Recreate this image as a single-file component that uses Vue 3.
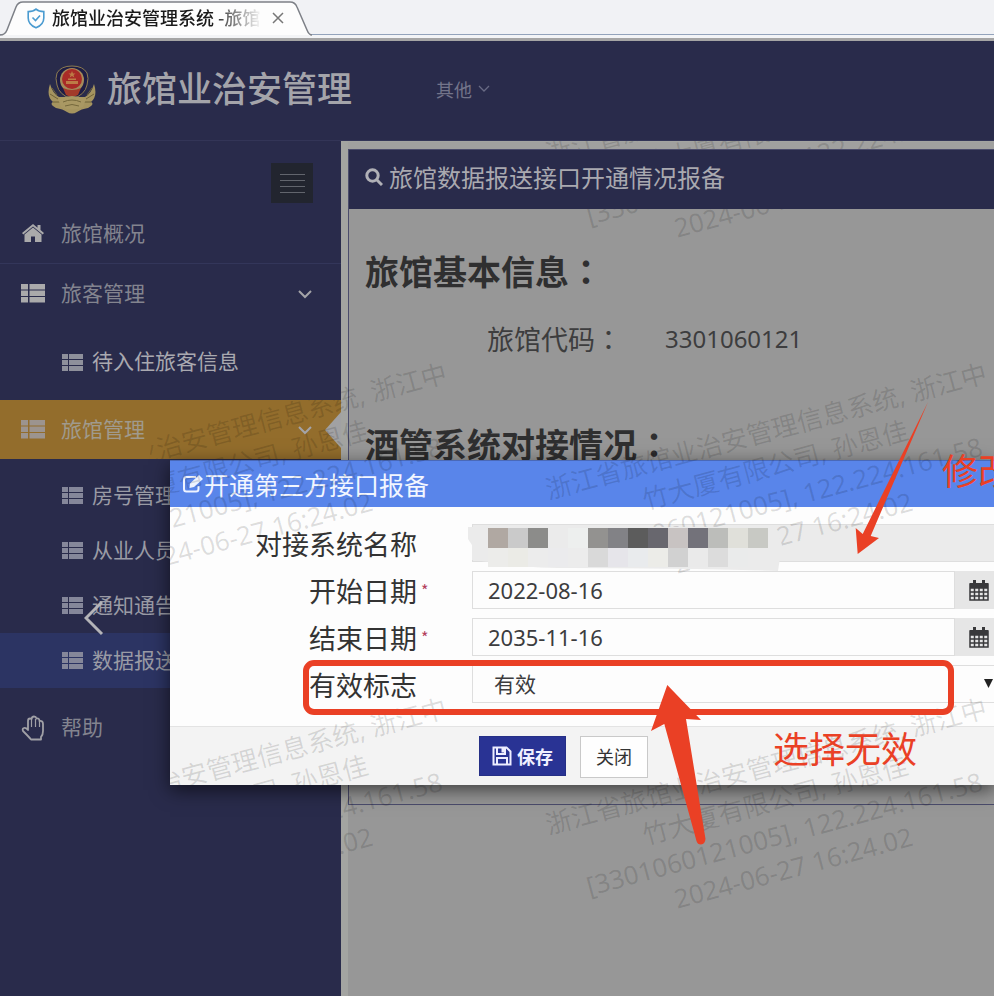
<script setup>
import { ref } from 'vue'

const startDate = ref('2022-08-16')
const endDate = ref('2035-11-16')
const flag = ref('有效')

const hotelItems = [
  { text: '房号管理', active: false },
  { text: '从业人员', active: false },
  { text: '通知通告', active: false },
  { text: '数据报送', active: true }
]

const marks = [
  [780, 147],
  [240, 483], [780, 483],
  [240, 818], [780, 818]
]
const markLines = [
  '浙江省旅馆业治安管理信息系统, 浙江中',
  '竹大厦有限公司, 孙恩佳',
  '[3301060121005], 122.224.161.58',
  '2024-06-27 16:24.02'
]

const mosaicTop = ['#b0a8a2', '#cacaca', '#8c8c8a', '#ebebeb', '#edefee', '#939290', '#828286', '#5c5c5c', '#68676e', '#c8c3c2', '#73727a', '#bcbdba', '#e0e0da', '#c8c9c4']
const mosaicBottom = ['#ececea', '#ebebe6', '#ececec', '#ebebed', '#ececec', '#d9d9d9', '#e6e5ea', '#e9ebed', '#ecece8', '#d1d1d1', '#eaeaea', '#dcdcdc', '#eaebeb', '#ebebeb']
</script>

<template>
  <div class="app">
    <div class="tabs">
      <div class="tab">
        <svg class="tab-shape" viewBox="0 0 312 36" preserveAspectRatio="none">
          <path d="M0 35 Q5 35 7 30 L16 7 Q18 2 23 2 H290 Q295 2 297 7 L307 30 Q309 35 312 35" fill="#fdfdfd" stroke="#7d8087" stroke-width="1.5" />
        </svg>
        <svg class="shield" viewBox="0 0 18 21" fill="none" stroke="#4a9bd0" stroke-width="1.6">
          <path d="M9 1.2 C7 3 4 3.6 1.2 3.6 V10 C1.2 15 4.5 18 9 19.8 C13.500 18 16.800 15 16.800 10 V3.600 C14 3.600 11 3 9 1.200Z" />
          <path d="M5.500 9.500 L8.500 12.500 L13 7.500" />
        </svg>
        <span class="tab-title">旅馆业治安管理系统 -旅馆</span>
        <button class="tab-close" aria-label="关闭标签页">
          <svg viewBox="0 0 12 12" width="12" height="12" stroke="#777" stroke-width="1.5"><path d="M1 1 L11 11 M11 1 L1 11" /></svg>
        </button>
      </div>
    </div>

    <header class="top">
      <svg class="badge" viewBox="0 0 50 50">
        <path d="M3 20 Q-1 32 6 38 Q2 40 9 44 Q16 45 20 48 Q25 51 30 48 Q34 45 41 44 Q48 40 44 38 Q51 32 47 20 Q44 30 38 33 H12 Q6 30 3 20Z" fill="#a5945f" />
        <path d="M5 24 L10 31 M3 30 L11 35 M6 38 L15 38 M45 24 L40 31 M47 30 L39 35 M44 38 L35 38" stroke="#6f6238" stroke-width="1" />
        <path d="M25 2 Q36 2 40 9 Q42 14 40 21 Q38 31 25 35 Q12 31 10 21 Q8 14 10 9 Q14 2 25 2Z" fill="#1e1d45" stroke="#8c7b50" stroke-width="1" />
        <circle cx="25" cy="16" r="12" fill="#a58b5a" />
        <circle cx="25" cy="15" r="10" fill="#a92b27" />
        <path d="M25 7 l1 2.500 h2.500 l-2 1.500 .800 2.500 -2.300-1.500 -2.300 1.500 .800-2.500 -2-1.500 h2.500Z M19 17 h12 v3 h-12Z M21 14.500 h8 v1.500 h-8Z" fill="#bd7c46" />
        <path d="M16 24 Q25 28 34 24 L31 31 Q25 34 19 31Z" fill="#a23a2a" />
        <path d="M11 35 Q25 29 39 35 L36 43 Q25 48 14 43Z" fill="#a99863" />
        <path d="M16 38 Q25 34 34 38 M18 42 Q25 39 32 42" stroke="#75683c" stroke-width="1" fill="none" />
      </svg>
      <h1 class="brand">旅馆业治安管理</h1>
      <a class="other" href="#">其他
        <svg viewBox="0 0 12 8" width="12" height="8" fill="none" stroke="#686a84" stroke-width="1.300"><path d="M1 1 L6 6 L11 1" /></svg>
      </a>
    </header>

    <div class="layout">
      <nav class="side">
        <div class="toggle-row">
          <button class="toggle" aria-label="折叠菜单"><i></i><i></i><i></i><i></i></button>
        </div>
        <a class="item" href="#">
          <svg class="ico" viewBox="0 0 24 22"><path d="M12 4.500 L3.500 11.500 V19 H10 V13.500 H14 V19 H20.500 V11.500Z M12 1 L1 10 L2.300 11.500 L12 3.600 L21.700 11.500 L23 10 L19.500 7.100 V2 H16.500 V4.700Z" fill="#aaaaab" /></svg>
          <span>旅馆概况</span>
        </a>
        <a class="item lined" href="#">
          <svg class="ico" viewBox="0 0 24 22"><path d="M0 1h7v5.500H0z M8.500 1H24v5.500H8.500z M0 7.500h7v5.500H0z M8.500 7.500H24v5.500H8.500z M0 14h7v5.500H0z M8.500 14H24v5.500H8.500z" fill="#aaaaab" /></svg>
          <span>旅客管理</span>
          <svg class="caret" viewBox="0 0 14 10"><path d="M1 2 L7 8 L13 2" /></svg>
        </a>
        <a class="sub tall" href="#">
          <svg class="sub-ico" viewBox="0 0 21 17"><path d="M0 0h6v5H0z M7 0H21v5H7z M0 6h6v5H0z M7 6H21v5H7z M0 12h6v5H0z M7 12H21v5H7z" fill="#8e909b" /></svg>
          <span>待入住旅客信息</span>
        </a>
        <a class="item current" href="#">
          <svg class="ico" viewBox="0 0 24 22"><path d="M0 1h7v5.500H0z M8.500 1H24v5.500H8.500z M0 7.500h7v5.500H0z M8.500 7.500H24v5.500H8.500z M0 14h7v5.500H0z M8.500 14H24v5.500H8.500z" fill="#9c948f" /></svg>
          <span>旅馆管理</span>
          <svg class="caret" viewBox="0 0 14 10"><path d="M1 2 L7 8 L13 2" /></svg>
        </a>
        <div class="subs">
          <a v-for="s in hotelItems" :key="s.text" class="sub" :class="{ active: s.active }" href="#">
            <svg class="sub-ico" viewBox="0 0 21 17"><path d="M0 0h6v5H0z M7 0H21v5H7z M0 6h6v5H0z M7 6H21v5H7z M0 12h6v5H0z M7 12H21v5H7z" fill="#85879a" /></svg>
            <span>{{ s.text }}</span>
          </a>
        </div>
        <a class="item help" href="#">
          <svg class="ico hand" viewBox="0 0 24 26" fill="none" stroke="#a0a0a6" stroke-width="1.800" stroke-linejoin="round"><path d="M7 15 V6 Q7 3.500 9 3.500 Q10 3.500 10.500 4 Q11 1.500 13 1.500 Q15 1.500 15.500 3.500 Q18.500 3 18.500 6 Q22 5.500 22 9 V16 Q22 20 20 22 V24.500 H10 Q8 22 2 16 Q1 13.500 3 13 Q5 12.500 7 15Z" /><path d="M10.500 4 V12 M14.500 4 V12 M18.500 6 V12" stroke-width="1.200" /></svg>
          <span>帮助</span>
        </a>
      </nav>

      <main class="content">
        <section class="panel">
          <h2 class="panel-head">
            <svg viewBox="0 0 18 18" width="18" height="18" fill="none" stroke="#b0b0b6" stroke-width="3"><circle cx="7.500" cy="7.500" r="5.700" /><path d="M11.500 11.500 L17 17" /></svg>
            旅馆数据报送接口开通情况报备
          </h2>
          <div class="panel-body">
            <h3>旅馆基本信息<span class="colon">：</span></h3>
            <dl class="code">
              <dt>旅馆代码<span class="colon">：</span></dt>
              <dd>3301060121</dd>
            </dl>
            <h3>酒管系统对接情况<span class="colon">：</span></h3>
          </div>
        </section>
      </main>
    </div>

    <form class="modal" @submit.prevent>
      <h2 class="modal-head">
        <svg viewBox="0 0 22 20" width="22" height="20" fill="none" stroke="#eef3ff" stroke-width="2"><path d="M14 3 H4.500 Q2 3 2 5.500 V15 Q2 17.500 4.500 17.500 H14 Q16.500 17.500 16.500 15 V12" /><path d="M8 9.500 L17 1 L21 5 L12 13 L7.500 14Z" fill="#eef3ff" stroke="none" /></svg>
        <span>开通第三方接口报备</span>
      </h2>
      <div class="modal-body">
        <div class="row">
          <label for="sys">对接系统名称<b></b></label>
          <input id="sys" class="field disabled" disabled>
          <svg class="mosaic" viewBox="0 0 314 44" width="314" height="44">
            <path d="M0 0 H300 Q312 8 314 18 L310 44 Q220 41 100 41 Q60 41 40 37 L4 33 V18 L0 12Z" fill="#ebebeb" />
            <rect v-for="(c, i) in mosaicTop" :key="'t' + i" :x="20 + i * 20" y="1" width="20" height="20" :fill="c" />
            <rect v-for="(c, i) in mosaicBottom" :key="'b' + i" :x="20 + i * 20" y="21" width="20" height="19" :fill="c" />
          </svg>
        </div>
        <div class="row">
          <label for="start">开始日期<b>*</b></label>
          <input id="start" v-model="startDate" class="field" type="text">
          <button class="addon" type="button" aria-label="选择开始日期">
            <svg viewBox="0 0 20 21" width="20" height="21"><path d="M1 4 H19 V20 H1Z M1 8 H19 M1 12 H19 M1 16 H19 M5.500 8 V20 M10 8 V20 M14.500 8 V20" fill="none" stroke="#39393b" stroke-width="1.500" /><path d="M1 3h18v5H1z M4 0h3v4H4z M13 0h3v4h-3z" fill="#39393b" /></svg>
          </button>
        </div>
        <div class="row">
          <label for="end">结束日期<b>*</b></label>
          <input id="end" v-model="endDate" class="field" type="text">
          <button class="addon" type="button" aria-label="选择结束日期">
            <svg viewBox="0 0 20 21" width="20" height="21"><path d="M1 4 H19 V20 H1Z M1 8 H19 M1 12 H19 M1 16 H19 M5.500 8 V20 M10 8 V20 M14.500 8 V20" fill="none" stroke="#39393b" stroke-width="1.500" /><path d="M1 3h18v5H1z M4 0h3v4H4z M13 0h3v4h-3z" fill="#39393b" /></svg>
          </button>
        </div>
        <div class="row">
          <label for="flag">有效标志<b></b></label>
          <select id="flag" v-model="flag" class="field choose">
            <option>有效</option>
            <option>无效</option>
          </select>
          <svg class="drop" viewBox="0 0 9 9" width="9" height="9"><path d="M0 0 H9 L4.500 9Z" fill="#222" /></svg>
        </div>
      </div>
      <div class="modal-foot">
        <button class="save" type="submit">
          <svg viewBox="0 0 20 20" width="20" height="20" fill="none" stroke="#eef" stroke-width="2"><path d="M1.500 1.500 H14.500 L18.500 5.500 V18.500 H1.500Z M5 18 V12 H15 V18" /><path d="M5 2 V8 H13 V2" /><path d="M9.500 2h2.500v4.500H9.500z" fill="#eef" stroke="none" /></svg>
          保存
        </button>
        <button class="close" type="button">关闭</button>
      </div>
    </form>

    <svg class="watermark" aria-hidden="true">
      <defs>
        <clipPath id="light-areas">
          <rect x="341" y="141" width="100%" height="8" />
          <rect x="341" y="209" width="100%" height="100%" />
          <rect x="150" y="400" width="191" height="59" />
          <rect x="170" y="460" width="171" height="325" />
        </clipPath>
      </defs>
      <g clip-path="url(#light-areas)">
        <g v-for="m in marks" :key="m.join()" :transform="`translate(${m[0]} ${m[1]}) rotate(-15)`">
          <text v-for="(line, i) in markLines" :key="line" x="0" :y="i * 35 - 44">{{ line }}</text>
        </g>
      </g>
    </svg>

    <button class="prev" aria-label="上一张">
      <svg viewBox="0 0 20 36" width="20" height="36" fill="none" stroke="#b4b4b8" stroke-width="3"><path d="M18 2 L2 18 L18 34" /></svg>
    </button>

    <svg class="notes" aria-hidden="true">
      <rect x="306" y="663" width="645" height="49" rx="8" fill="none" stroke="#ea4025" stroke-width="6" />
      <path d="M928 402 L870.700 536 L879 538 L857.700 554 L855.700 528 L862.700 534Z" fill="#ea4025" />
      <path d="M667.300 685 L701 720 L686 719 L705.500 839 Q705 844 701 844.500 Q697.500 844.500 696.500 841 L664.300 724 L651 731Z" fill="#ea4025" />
      <text x="773" y="763" font-size="36">选择无效</text>
      <text x="942" y="485" font-size="36">修改</text>
    </svg>
  </div>
</template>

<style>
body {
  background: #979797;
}
</style>

<style scoped>
.app {
  position: relative;
  display: flex;
  flex-direction: column;
  min-height: 100vh;
  overflow: hidden;
  font-family: "Noto Sans CJK SC", sans-serif;
  color: #333;
}
.app * {
  box-sizing: border-box;
}
a {
  color: inherit;
  text-decoration: none;
}
button {
  font-family: inherit;
  padding: 0;
  cursor: pointer;
}
h1, h2, h3, dl, dd {
  margin: 0;
}

.tabs {
  height: 41px;
  background: linear-gradient(#f1f2f5 0 34px, #93a3bb 34px 35px, #f3f4f6 35px 38px, #a5a5a5 38px 41px);
}
.tab {
  position: relative;
  display: flex;
  align-items: center;
  width: 312px;
  height: 36px;
  padding-left: 27px;
}
.tab-shape {
  position: absolute;
  left: 0;
  top: 0;
  width: 312px;
  height: 36px;
}
.shield {
  position: relative;
  width: 18px;
  height: 21px;
  margin-right: 7px;
}
.tab-title {
  position: relative;
  width: 210px;
  padding-bottom: 2px;
  overflow: hidden;
  white-space: nowrap;
  font-size: 18px;
  line-height: 26px;
  font-weight: 500;
  color: #1a1a1a;
  -webkit-mask-image: linear-gradient(90deg, #000 76%, transparent);
  mask-image: linear-gradient(90deg, #000 76%, transparent);
}
.tab-close {
  position: relative;
  display: flex;
  margin-left: 10px;
  border: 0;
  background: none;
}

.top {
  display: flex;
  align-items: center;
  height: 100px;
  padding: 0 0 4px 47px;
  background: #292b4b;
  border-bottom: 1px solid #333557;
}
.badge {
  width: 50px;
  height: 50px;
  margin-right: 10px;
}
.brand {
  padding-bottom: 4px;
  font-size: 35px;
  line-height: 48px;
  font-weight: 500;
  color: #a4a4aa;
}
.other {
  display: flex;
  align-items: center;
  gap: 6px;
  margin-left: 84px;
  font-size: 18px;
  color: #73748a;
}

.layout {
  display: flex;
  flex: 1;
}
.side {
  flex: 0 0 341px;
  background: #292b4b;
  font-size: 21px;
}
.item span, .sub span {
  padding-bottom: 4px;
}
.toggle-row {
  display: flex;
  justify-content: flex-end;
  height: 63px;
  padding: 22px 28px 0 0;
}
.toggle {
  display: flex;
  flex-direction: column;
  align-items: center;
  justify-content: center;
  gap: 5px;
  width: 42px;
  height: 40px;
  border: 0;
  background: #22252f;
}
.toggle i {
  width: 25px;
  height: 1px;
  background: #62656d;
}
.item {
  position: relative;
  display: flex;
  align-items: center;
  height: 59px;
  padding-left: 21px;
  color: #83848f;
}
.lined {
  height: 61px;
  border-top: 1px solid #33365a;
}
.ico {
  width: 24px;
  height: 22px;
  margin-right: 16px;
}
.hand {
  height: 26px;
}
.caret {
  width: 14px;
  height: 10px;
  margin-left: auto;
  margin-right: 29px;
  fill: none;
  stroke: #a4a4a8;
  stroke-width: 2;
}
.sub {
  display: flex;
  align-items: center;
  gap: 9px;
  height: 55px;
  padding-left: 62px;
  color: #9a9ba5;
  white-space: nowrap;
}
.tall {
  height: 76px;
  color: #a9a9b0;
}
.sub-ico {
  width: 21px;
  height: 17px;
}
.active {
  background: #2c3463;
}
.subs {
  padding-top: 9px;
}
.current {
  background: #936d2c;
  color: #a09a8d;
}
.current::after {
  content: "";
  position: absolute;
  right: 0;
  top: 12px;
  width: 16px;
  height: 36px;
  background: #a1a1a3;
  clip-path: polygon(0 50%, 100% 0, 100% 100%);
}
.help {
  height: 80px;
}

.content {
  flex: 1;
  min-width: 0;
  padding: 7px 0 0 7px;
  background: linear-gradient(90deg, #a3a4a1 0 7px, #979797 7px);
  border-top: 1px solid #a3a4a1;
}
.panel {
  height: 656px;
  border: 1px solid #4b4c6c;
  border-right: 0;
  background: #979797;
  box-shadow: 0 -7px 0 #a0a09f;
}
.panel-head {
  display: flex;
  align-items: center;
  gap: 6px;
  height: 59px;
  padding: 0 0 6px 16px;
  background: #292b4b;
  font-size: 24px;
  font-weight: 400;
  color: #a9a9b0;
  white-space: nowrap;
}
.panel-body {
  padding: 38px 16px 0;
}
.panel-body h3 {
  font-size: 34px;
  line-height: 48px;
  font-weight: 700;
  color: #2f2f30;
}
.colon {
  font-family: "Noto Sans CJK TC", sans-serif;
}
.code {
  display: flex;
  align-items: center;
  height: 40px;
  margin: 23px 0 62px 122px;
  color: #3d3d3e;
}
.code dt {
  width: 178px;
  font-size: 27px;
}
.code dd {
  font-family: "Noto Sans", sans-serif;
  font-size: 24px;
}

.modal {
  position: absolute;
  left: 170px;
  right: 0;
  top: 460px;
  background: #fdfdfd;
  box-shadow: 0 5px 18px rgba(0, 0, 0, 0.6);
}
.modal-head {
  display: flex;
  align-items: center;
  height: 47px;
  padding: 0 12px;
  border-top: 1px solid #4a69b8;
  background: #5985ea;
  font-size: 25px;
  font-weight: 400;
  color: #f2f6ff;
}
.modal-body {
  display: flex;
  flex-direction: column;
  gap: 9px;
  padding: 17px 0 23px;
}
.row {
  position: relative;
  display: flex;
  height: 38px;
}
.row label {
  display: flex;
  align-items: center;
  justify-content: flex-end;
  flex: 0 0 302px;
  padding-right: 43px;
  font-size: 27px;
  color: #333;
}
.row b {
  width: 12px;
  padding-left: 4px;
  font-size: 16px;
  font-weight: 400;
  color: #b3405e;
}
.field {
  flex: 1;
  min-width: 0;
  height: 38px;
  padding: 0 15px;
  border: 1px solid #dedede;
  border-radius: 0;
  background: #fdfdfd;
  font-family: "Noto Sans", "Noto Sans CJK SC", sans-serif;
  font-size: 22px;
  color: #3c3c3e;
}
.disabled {
  background: #ebebeb;
  border-right: 0;
}
.choose {
  appearance: none;
  padding: 0 21px;
  border-right: 0;
  font-size: 21px;
}
.addon {
  display: flex;
  align-items: center;
  justify-content: flex-end;
  width: 39px;
  padding-right: 5px;
  border: 0;
  background: #e6e6e6;
}
.drop {
  position: absolute;
  right: 1px;
  top: 14px;
  pointer-events: none;
}
.mosaic {
  position: absolute;
  z-index: 1;
  left: 298px;
  top: 3px;
}
.modal-foot {
  display: flex;
  gap: 14px;
  height: 59px;
  padding: 9px 0 0 309px;
  border-top: 1px solid #e3e3e3;
  background: #f3f3f3;
}
.save {
  display: flex;
  align-items: center;
  justify-content: center;
  gap: 5px;
  width: 87px;
  height: 40px;
  border: 1px solid #252f86;
  background: #293394;
  font-size: 18px;
  font-weight: 700;
  color: #f0f0ff;
}
.close {
  width: 68px;
  height: 42px;
  padding-bottom: 3px;
  border: 1px solid #c9c9c9;
  background: #fefefe;
  font-size: 18px;
  color: #333;
}

.watermark, .notes {
  position: absolute;
  left: 0;
  top: 0;
  width: 100%;
  height: 100%;
  pointer-events: none;
}
.notes {
  z-index: 2;
}
.watermark text {
  font-family: "Noto Sans", "Noto Sans CJK SC", sans-serif;
  font-size: 26px;
  fill: rgba(0, 0, 0, 0.13);
  text-anchor: middle;
}
.notes text {
  fill: #ea4025;
}
.prev {
  position: absolute;
  left: 84px;
  top: 600px;
  display: flex;
  border: 0;
  background: none;
}
</style>
